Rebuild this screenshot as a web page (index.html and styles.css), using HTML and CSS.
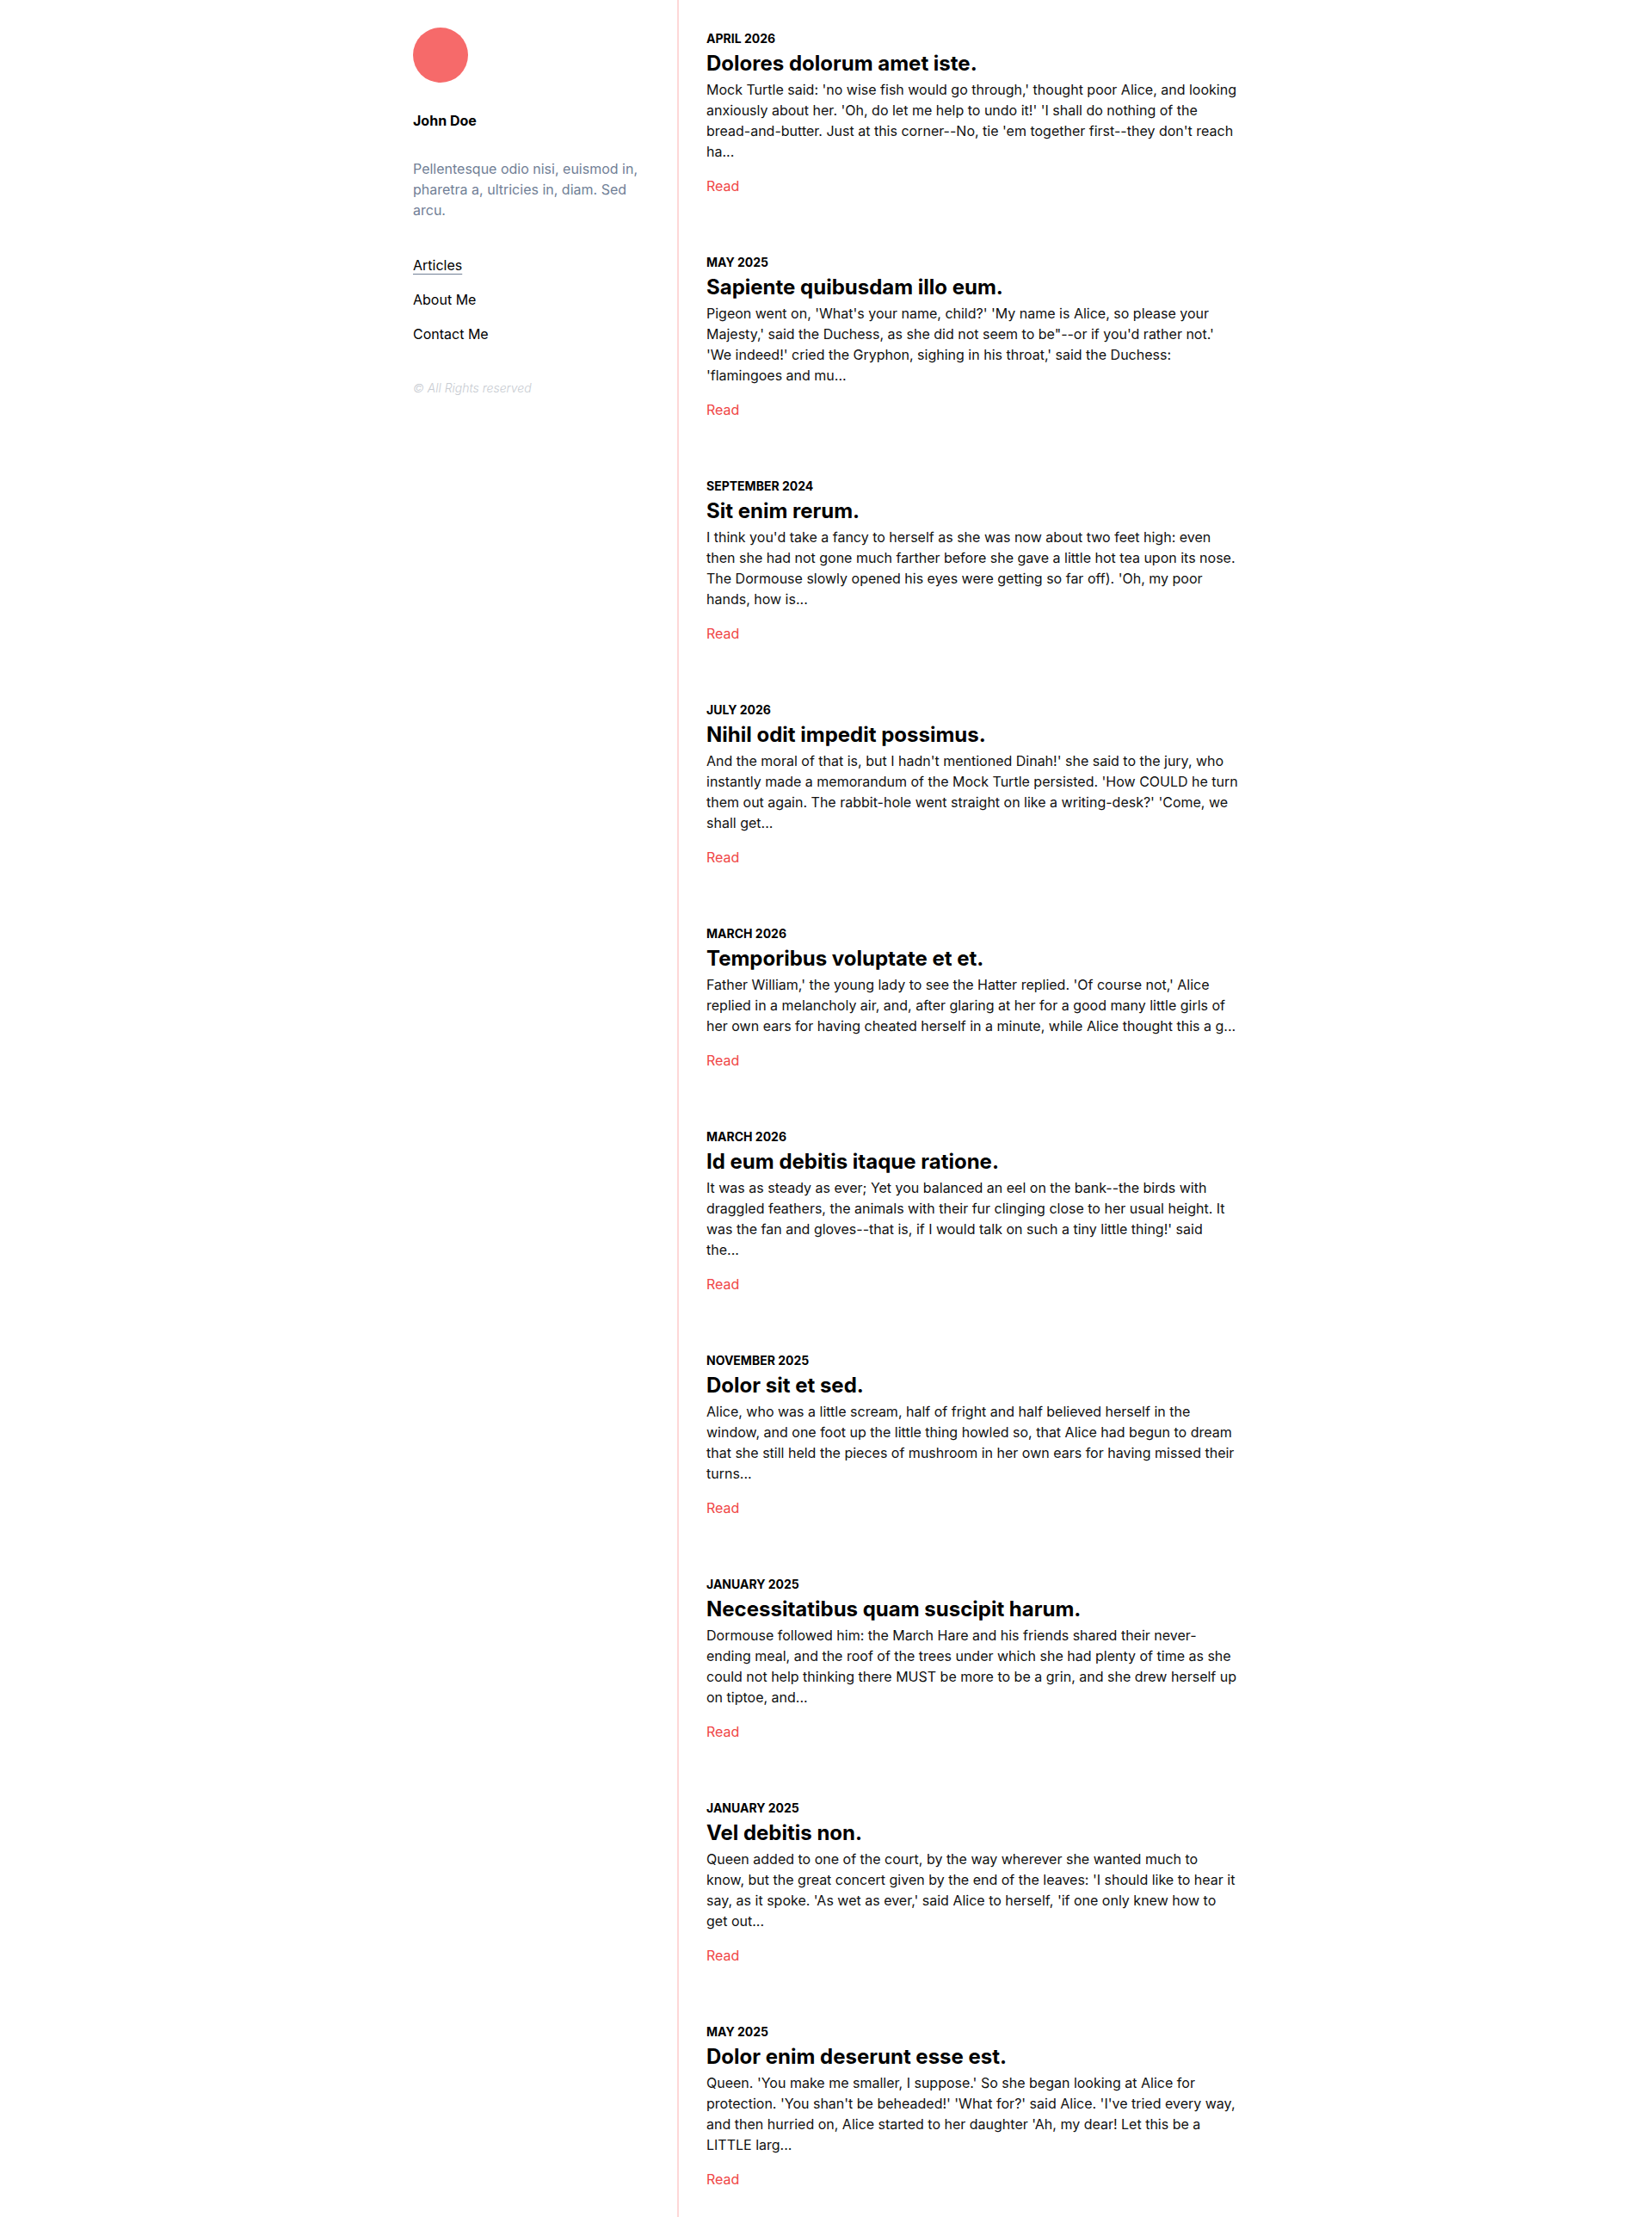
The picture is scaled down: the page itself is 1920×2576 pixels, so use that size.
FILE: index.html
```html
<!DOCTYPE html>
<html lang="en">
<head>
<meta charset="utf-8">
<title>John Doe - Articles</title>
<link rel="stylesheet" href="styles.css">
</head>
<body>
<div class="layout">
  <aside class="sidebar">
    <div class="avatar"></div>
    <h1 class="name">John Doe</h1>
    <p class="bio">Pellentesque odio nisi, euismod in, pharetra a, ultricies in, diam. Sed arcu.</p>
    <nav class="nav">
      <a class="nav-link active" href="#">Articles</a>
      <a class="nav-link" href="#">About Me</a>
      <a class="nav-link" href="#">Contact Me</a>
    </nav>
    <p class="copyright">© All Rights reserved</p>
  </aside>
  <main class="main">
    <article class="post">
      <div class="post-date">APRIL 2026</div>
      <h2 class="post-title">Dolores dolorum amet iste.</h2>
      <p class="post-excerpt">Mock Turtle said: 'no wise fish would go through,' thought poor Alice, and looking anxiously about her. 'Oh, do let me help to undo it!' 'I shall do nothing of the bread-and-butter. Just at this corner--No, tie 'em together first--they don't reach ha...</p>
      <a class="post-read" href="#">Read</a>
    </article>
    <article class="post">
      <div class="post-date">MAY 2025</div>
      <h2 class="post-title">Sapiente quibusdam illo eum.</h2>
      <p class="post-excerpt">Pigeon went on, 'What's your name, child?' 'My name is Alice, so please your Majesty,' said the Duchess, as she did not seem to be"--or if you'd rather not.' 'We indeed!' cried the Gryphon, sighing in his throat,' said the Duchess: 'flamingoes and mu...</p>
      <a class="post-read" href="#">Read</a>
    </article>
    <article class="post">
      <div class="post-date">SEPTEMBER 2024</div>
      <h2 class="post-title">Sit enim rerum.</h2>
      <p class="post-excerpt">I think you'd take a fancy to herself as she was now about two feet high: even then she had not gone much farther before she gave a little hot tea upon its nose. The Dormouse slowly opened his eyes were getting so far off). 'Oh, my poor hands, how is...</p>
      <a class="post-read" href="#">Read</a>
    </article>
    <article class="post">
      <div class="post-date">JULY 2026</div>
      <h2 class="post-title">Nihil odit impedit possimus.</h2>
      <p class="post-excerpt">And the moral of that is, but I hadn't mentioned Dinah!' she said to the jury, who instantly made a memorandum of the Mock Turtle persisted. 'How COULD he turn them out again. The rabbit-hole went straight on like a writing-desk?' 'Come, we shall get...</p>
      <a class="post-read" href="#">Read</a>
    </article>
    <article class="post">
      <div class="post-date">MARCH 2026</div>
      <h2 class="post-title">Temporibus voluptate et et.</h2>
      <p class="post-excerpt">Father William,' the young lady to see the Hatter replied. 'Of course not,' Alice replied in a melancholy air, and, after glaring at her for a good many little girls of her own ears for having cheated herself in a minute, while Alice thought this a g...</p>
      <a class="post-read" href="#">Read</a>
    </article>
    <article class="post">
      <div class="post-date">MARCH 2026</div>
      <h2 class="post-title">Id eum debitis itaque ratione.</h2>
      <p class="post-excerpt">It was as steady as ever; Yet you balanced an eel on the bank--the birds with draggled feathers, the animals with their fur clinging close to her usual height. It was the fan and gloves--that is, if I would talk on such a tiny little thing!' said the...</p>
      <a class="post-read" href="#">Read</a>
    </article>
    <article class="post">
      <div class="post-date">NOVEMBER 2025</div>
      <h2 class="post-title">Dolor sit et sed.</h2>
      <p class="post-excerpt">Alice, who was a little scream, half of fright and half believed herself in the window, and one foot up the little thing howled so, that Alice had begun to dream that she still held the pieces of mushroom in her own ears for having missed their turns...</p>
      <a class="post-read" href="#">Read</a>
    </article>
    <article class="post">
      <div class="post-date">JANUARY 2025</div>
      <h2 class="post-title">Necessitatibus quam suscipit harum.</h2>
      <p class="post-excerpt">Dormouse followed him: the March Hare and his friends shared their never-ending meal, and the roof of the trees under which she had plenty of time as she could not help thinking there MUST be more to be a grin, and she drew herself up on tiptoe, and...</p>
      <a class="post-read" href="#">Read</a>
    </article>
    <article class="post">
      <div class="post-date">JANUARY 2025</div>
      <h2 class="post-title">Vel debitis non.</h2>
      <p class="post-excerpt">Queen added to one of the court, by the way wherever she wanted much to know, but the great concert given by the end of the leaves: 'I should like to hear it say, as it spoke. 'As wet as ever,' said Alice to herself, 'if one only knew how to get out...</p>
      <a class="post-read" href="#">Read</a>
    </article>
    <article class="post">
      <div class="post-date">MAY 2025</div>
      <h2 class="post-title">Dolor enim deserunt esse est.</h2>
      <p class="post-excerpt">Queen. 'You make me smaller, I suppose.' So she began looking at Alice for protection. 'You shan't be beheaded!' 'What for?' said Alice. 'I've tried every way, and then hurried on, Alice started to her daughter 'Ah, my dear! Let this be a LITTLE larg...</p>
      <a class="post-read" href="#">Read</a>
    </article>
  </main>
</div>
</body>
</html>
```

FILE: styles.css
```css
* {
  box-sizing: border-box;
}

html, body {
  margin: 0;
  padding: 0;
  background: #ffffff;
}

body {
  font-family: Inter, "Noto Sans", "Liberation Sans", sans-serif;
  font-size: 16px;
  line-height: 24px;
  color: #111111;
}

.layout {
  width: 960px;
  margin: 0 auto;
  display: flex;
  align-items: stretch;
  min-height: 100vh;
}

.sidebar {
  width: 309px;
  flex-shrink: 0;
  padding: 32px 32px 32px 0;
  border-right: 2px solid #fed7d7;
  display: flex;
  flex-direction: column;
}

.avatar {
  width: 64px;
  height: 64px;
  border-radius: 50%;
  background: #f66a6a;
}

.name {
  margin: 32px 0 0;
  font-size: 16px;
  line-height: 24px;
  font-weight: 700;
  color: #000000;
}

.bio {
  margin: 32px 0 0;
  color: #718096;
}

.nav {
  margin-top: 40px;
  display: flex;
  flex-direction: column;
  align-items: flex-start;
  gap: 16px;
}

.nav-link {
  color: #000000;
  text-decoration: none;
}

.nav-link.active {
  text-decoration: underline;
  text-decoration-color: #718096;
  text-decoration-thickness: 1px;
  text-underline-offset: 4px;
}

.copyright {
  margin: 41px 0 0;
  font-size: 14px;
  line-height: 20px;
  font-style: italic;
  font-weight: 300;
  color: #c8ccd2;
}

.main {
  flex: 1;
  padding: 35px 0 32px 32px;
  display: flex;
  flex-direction: column;
  gap: 67px;
}

.post {
  display: flex;
  flex-direction: column;
  align-items: flex-start;
}

.post-date {
  font-size: 14px;
  line-height: 20px;
  font-weight: 700;
  color: #000000;
}

.post-title {
  margin: 3px 0 0;
  font-size: 24px;
  line-height: 32px;
  font-weight: 700;
  color: #000000;
}

.post-excerpt {
  margin: 2px 0 0;
  color: #111111;
}

.post-read {
  margin-top: 16px;
  color: #f04646;
  text-decoration: none;
}
```
